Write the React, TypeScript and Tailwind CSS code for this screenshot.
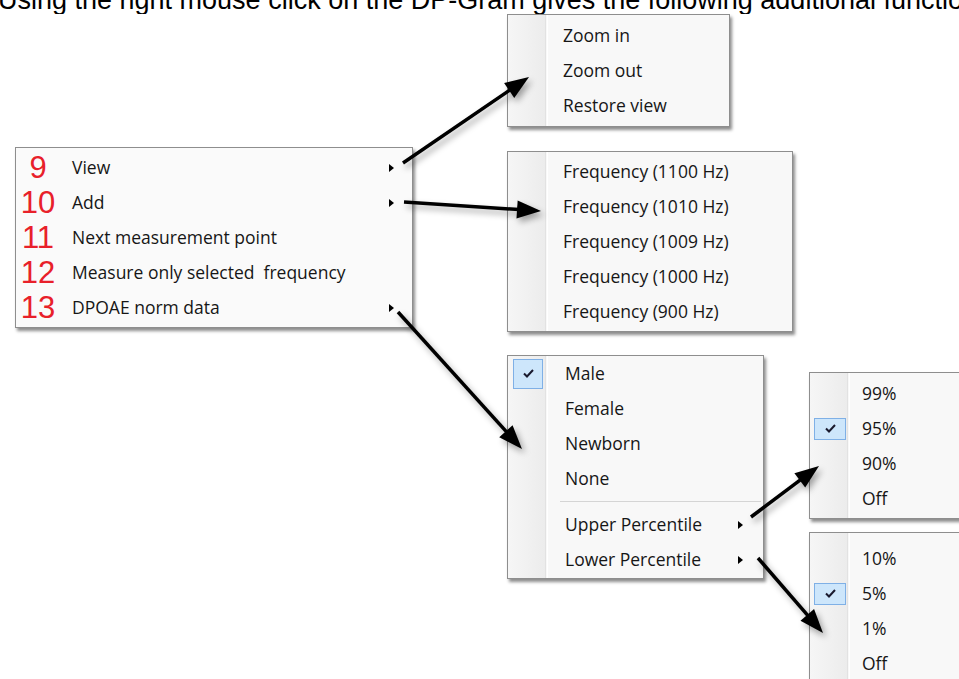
import React from 'react';

const font = { fontFamily: '"Open Sans", "Noto Sans", sans-serif' };

const SubArrow: React.FC = () => (
  <span className="block w-0 h-0 border-y-[4px] border-y-transparent border-l-[5px] border-l-black" />
);

const Check: React.FC<{ h: string }> = ({ h }) => (
  <div className={`flex items-center justify-center border border-[#7fb0e6] bg-[#cde6fb] ${h}`}>
    <svg width="11" height="9" viewBox="0 0 11 9">
      <path d="M1 4.5 L4 7.5 L10 1" fill="none" stroke="#1a1a2e" strokeWidth="2" />
    </svg>
  </div>
);

interface Item {
  label: string;
  sub?: boolean;
  checked?: boolean;
  sep?: boolean;
}

const Menu: React.FC<{
  items: Item[];
  width: string;
  pad: string;
  textLeft: string;
  checkH?: string;
  arrowRight?: string;
}> = ({ items, width, pad, textLeft, checkH = 'h-[30px] w-[30px]', arrowRight = 'mr-[20px]' }) => (
  <div className={`relative shrink-0 bg-[#f8f8f8] border border-[#8e8e8e] shadow-[2px_3px_3px_rgba(0,0,0,0.45)] ${width}`}>
    <div className="absolute left-0 top-0 bottom-0 w-[38px] bg-gradient-to-r from-[#f6f6f6] to-[#ececec] border-r border-[#e2e2e2]" />
    <div className="absolute left-[39px] top-0 bottom-0 w-px bg-white" />
    <div className={`relative flex flex-col ${pad}`}>
      {items.map((it, i) =>
        it.sep ? (
          <div key={i} className="h-[11px] flex items-center pl-[52px] pr-[2px]">
            <div className="w-full h-px bg-[#d5d5d5]" />
          </div>
        ) : (
          <div key={i} className="h-[35px] flex items-center text-[17.5px] text-[#161616]" style={font}>
            <div className="w-[38px] flex items-center justify-center pl-[2px]">
              {it.checked && <Check h={checkH} />}
            </div>
            <span className={textLeft}>{it.label}</span>
            {it.sub && <span className={`ml-auto ${arrowRight}`}><SubArrow /></span>}
          </div>
        )
      )}
    </div>
  </div>
);

const mainItems = [
  { n: '9', label: 'View', sub: true },
  { n: '10', label: 'Add', sub: true },
  { n: '11', label: 'Next measurement point' },
  { n: '12', label: 'Measure only selected\u00a0 frequency' },
  { n: '13', label: 'DPOAE norm data', sub: true },
];

const Arrow: React.FC<{ x1: number; y1: number; x2: number; y2: number }> = ({ x1, y1, x2, y2 }) => {
  const dx = x2 - x1;
  const dy = y2 - y1;
  const len = Math.hypot(dx, dy);
  const ux = dx / len;
  const uy = dy / len;
  const hl = 24;
  const hw = 9;
  const bx = x2 - ux * hl;
  const by = y2 - uy * hl;
  const pts = `${x2},${y2} ${bx - uy * hw},${by + ux * hw} ${bx + uy * hw},${by - ux * hw}`;
  return (
    <g>
      <line x1={x1} y1={y1} x2={bx + ux * 2} y2={by + uy * 2} stroke="#000" strokeWidth="3.5" />
      <polygon points={pts} fill="#000" />
    </g>
  );
};

export default function App() {
  return (
    <div className="relative w-[959px] h-[679px] overflow-hidden bg-white">
      <div className="h-[14px] overflow-hidden">
        <p
          className="-mt-[13px] -ml-[2px] whitespace-nowrap text-[27px] leading-[27px] text-black"
          style={{ fontFamily: '"Liberation Sans", Arial, sans-serif' }}
        >
          Using the right mouse click on the DP-Gram gives the following additional functions
        </p>
      </div>

      <div className="flex items-start">
        {/* main context menu */}
        <div className="shrink-0 ml-[15px] mt-[133px] w-[398px] bg-[#fafafa] border border-[#8e8e8e] shadow-[2px_3px_3px_rgba(0,0,0,0.45)] py-[2px]">
          {mainItems.map((it) => (
            <div key={it.n} className="h-[35px] flex items-center">
              <span
                className="w-[42px] ml-[1px] text-center text-[31px] leading-none text-[#e8202a]"
                style={{ fontFamily: '"Liberation Sans", Arial, sans-serif' }}
              >
                {it.n}
              </span>
              <span className="ml-[13px] text-[17.5px] text-[#161616]" style={font}>
                {it.label}
              </span>
              {it.sub && (
                <span className="ml-auto mr-[18px]">
                  <SubArrow />
                </span>
              )}
            </div>
          ))}
        </div>

        {/* middle column */}
        <div className="shrink-0 ml-[94px] flex flex-col items-start">
          <Menu
            width="w-[223px]"
            pad="py-[3px]"
            textLeft="ml-[17px]"
            items={[{ label: 'Zoom in' }, { label: 'Zoom out' }, { label: 'Restore view' }]}
          />
          <div className="mt-[24px]">
            <Menu
              width="w-[286px]"
              pad="py-[2px]"
              textLeft="ml-[17px]"
              items={[
                { label: 'Frequency (1100 Hz)' },
                { label: 'Frequency (1010 Hz)' },
                { label: 'Frequency (1009 Hz)' },
                { label: 'Frequency (1000 Hz)' },
                { label: 'Frequency (900 Hz)' },
              ]}
            />
          </div>
          <div className="mt-[23px]">
            <Menu
              width="w-[257px]"
              pad="pt-[0px] pb-[1px]"
              textLeft="ml-[19px]"
              arrowRight="mr-[20px]"
              items={[
                { label: 'Male', checked: true },
                { label: 'Female' },
                { label: 'Newborn' },
                { label: 'None' },
                { label: '', sep: true },
                { label: 'Upper Percentile', sub: true },
                { label: 'Lower Percentile', sub: true },
              ]}
            />
          </div>
        </div>

        {/* right column */}
        <div className="shrink-0 ml-[16px] mt-[358px] flex flex-col items-start">
          <Menu
            width="w-[220px]"
            pad="pt-[3px] pb-[2px]"
            textLeft="ml-[14px]"
            checkH="h-[22px] w-[32px]"
            items={[{ label: '99%' }, { label: '95%', checked: true }, { label: '90%' }, { label: 'Off' }]}
          />
          <div className="mt-[13px]">
            <Menu
              width="w-[220px]"
              pad="pt-[8px]"
              textLeft="ml-[14px]"
              checkH="h-[22px] w-[32px]"
              items={[{ label: '10%' }, { label: '5%', checked: true }, { label: '1%' }, { label: 'Off' }]}
            />
          </div>
        </div>
      </div>

      <svg
        className="absolute inset-0 pointer-events-none"
        width="959"
        height="679"
        style={{ filter: 'drop-shadow(3px 4px 3px rgba(0,0,0,0.35))' }}
      >
        <Arrow x1={403} y1={163} x2={529} y2={77} />
        <Arrow x1={404} y1={202} x2={541} y2={211} />
        <Arrow x1={398} y1={312} x2={522} y2={449} />
        <Arrow x1={751} y1={517} x2={819} y2={466} />
        <Arrow x1={758} y1={558} x2={823} y2={633} />
      </svg>
    </div>
  );
}
